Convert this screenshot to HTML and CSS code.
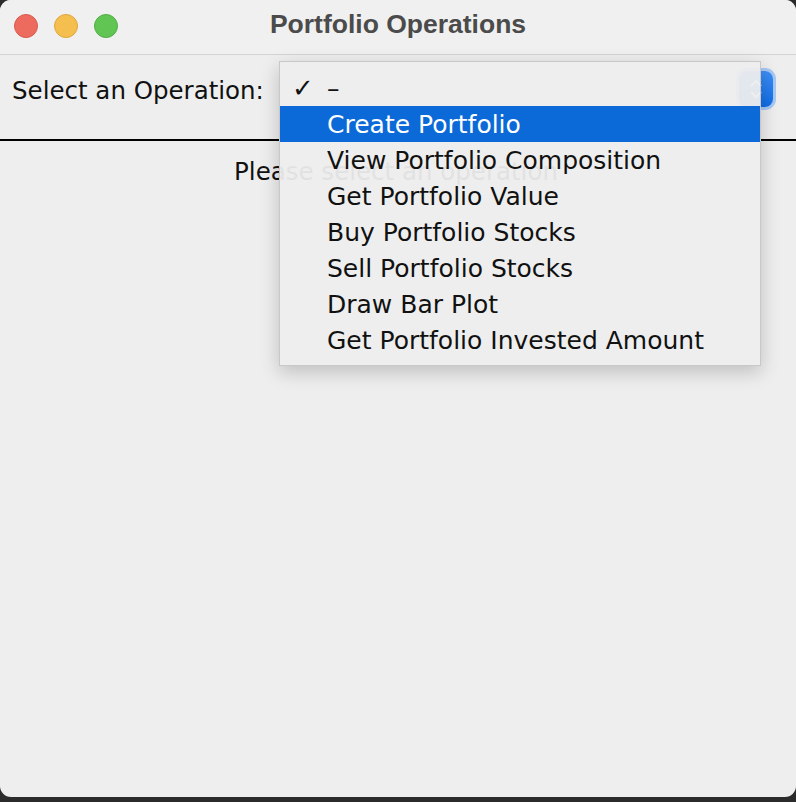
FILE: index.html
```html
<!DOCTYPE html>
<html>
<head>
<meta charset="utf-8">
<link rel="stylesheet" href="styles.css">
</head>
<body>
<div class="window">
  <div class="titlebar">
    <div class="lights">
      <span class="light red"></span>
      <span class="light yellow"></span>
      <span class="light green"></span>
    </div>
    <div class="title">Portfolio Operations</div>
  </div>
  <div class="toolbar">
    <span class="label">Select an Operation:</span>
    <div class="combo">
      <div class="combo-btn">
        <svg width="14" height="22" viewBox="0 0 14 22"><path d="M2 8 L7 3 L12 8 M2 14 L7 19 L12 14" fill="none" stroke="#fff" stroke-width="2"/></svg>
      </div>
    </div>
  </div>
  <div class="separator"></div>
  <div class="message">Please select an operation</div>

  <div class="popup">
    <div class="item"><span class="check">✓</span><span class="text">–</span></div>
    <div class="item highlight"><span class="check"></span><span class="text">Create Portfolio</span></div>
    <div class="item"><span class="check"></span><span class="text">View Portfolio Composition</span></div>
    <div class="item"><span class="check"></span><span class="text">Get Portfolio Value</span></div>
    <div class="item"><span class="check"></span><span class="text">Buy Portfolio Stocks</span></div>
    <div class="item"><span class="check"></span><span class="text">Sell Portfolio Stocks</span></div>
    <div class="item"><span class="check"></span><span class="text">Draw Bar Plot</span></div>
    <div class="item"><span class="check"></span><span class="text">Get Portfolio Invested Amount</span></div>
  </div>
</div>
</body>
</html>
```

FILE: styles.css
```css
html, body {
  margin: 0;
  padding: 0;
  background: #2b2b2b;
  width: 796px;
  height: 802px;
  overflow: hidden;
}

.window {
  position: relative;
  width: 796px;
  height: 797px;
  background: #eeeeee;
  border-radius: 11px;
  overflow: hidden;
  font-family: "DejaVu Sans", "Noto Sans", sans-serif;
  color: #111;
}

.titlebar {
  position: relative;
  height: 54px;
  background: #f0f0f0;
  border-bottom: 1px solid #d3d3d3;
  display: flex;
  align-items: center;
  justify-content: center;
}

.lights {
  position: absolute;
  left: 14px;
  top: 14px;
  display: flex;
  gap: 16px;
}

.light {
  width: 24px;
  height: 24px;
  border-radius: 50%;
  box-sizing: border-box;
}
.red { background: #ed6a5e; border: 1px solid #d95a4f; }
.yellow { background: #f5bf4f; border: 1px solid #dea73d; }
.green { background: #61c554; border: 1px solid #51ad46; }

.title {
  font-family: "Liberation Sans", Arial, sans-serif;
  font-weight: bold;
  font-size: 26.5px;
  color: #4b4b4b;
  margin-top: -6px;
}

.toolbar {
  height: 84px;
  display: flex;
  align-items: center;
  justify-content: space-between;
  padding: 0 23px 0 12px;
  box-sizing: border-box;
}

.label {
  font-size: 24.5px;
  margin-top: -14px;
}

.combo {
  margin-top: -16px;
}

.combo-btn {
  width: 34px;
  height: 36px;
  border-radius: 8px;
  background: linear-gradient(#3d8ef6, #0f6ce6);
  box-shadow: 0 0 0 3px #a7c8f5;
  display: flex;
  align-items: center;
  justify-content: center;
}

.separator {
  height: 2px;
  background: #000;
}

.message {
  text-align: center;
  font-size: 24.5px;
  padding-top: 16px;
  padding-right: 4px;
}

.popup {
  position: absolute;
  left: 279px;
  top: 61px;
  width: 482px;
  height: 305px;
  box-sizing: border-box;
  padding-top: 8px;
  background: rgba(237, 237, 237, 0.95);
  border: 1px solid #c8c8c8;
  box-shadow: 0 6px 18px rgba(0, 0, 0, 0.2);
}

.item {
  height: 36px;
  display: flex;
  align-items: center;
  font-size: 25px;
  color: #111;
}

.check {
  width: 47px;
  padding-left: 12px;
  box-sizing: border-box;
  font-size: 26px;
  font-weight: bold;
}

.highlight {
  background: #0b69d8;
  color: #fff;
}
```
